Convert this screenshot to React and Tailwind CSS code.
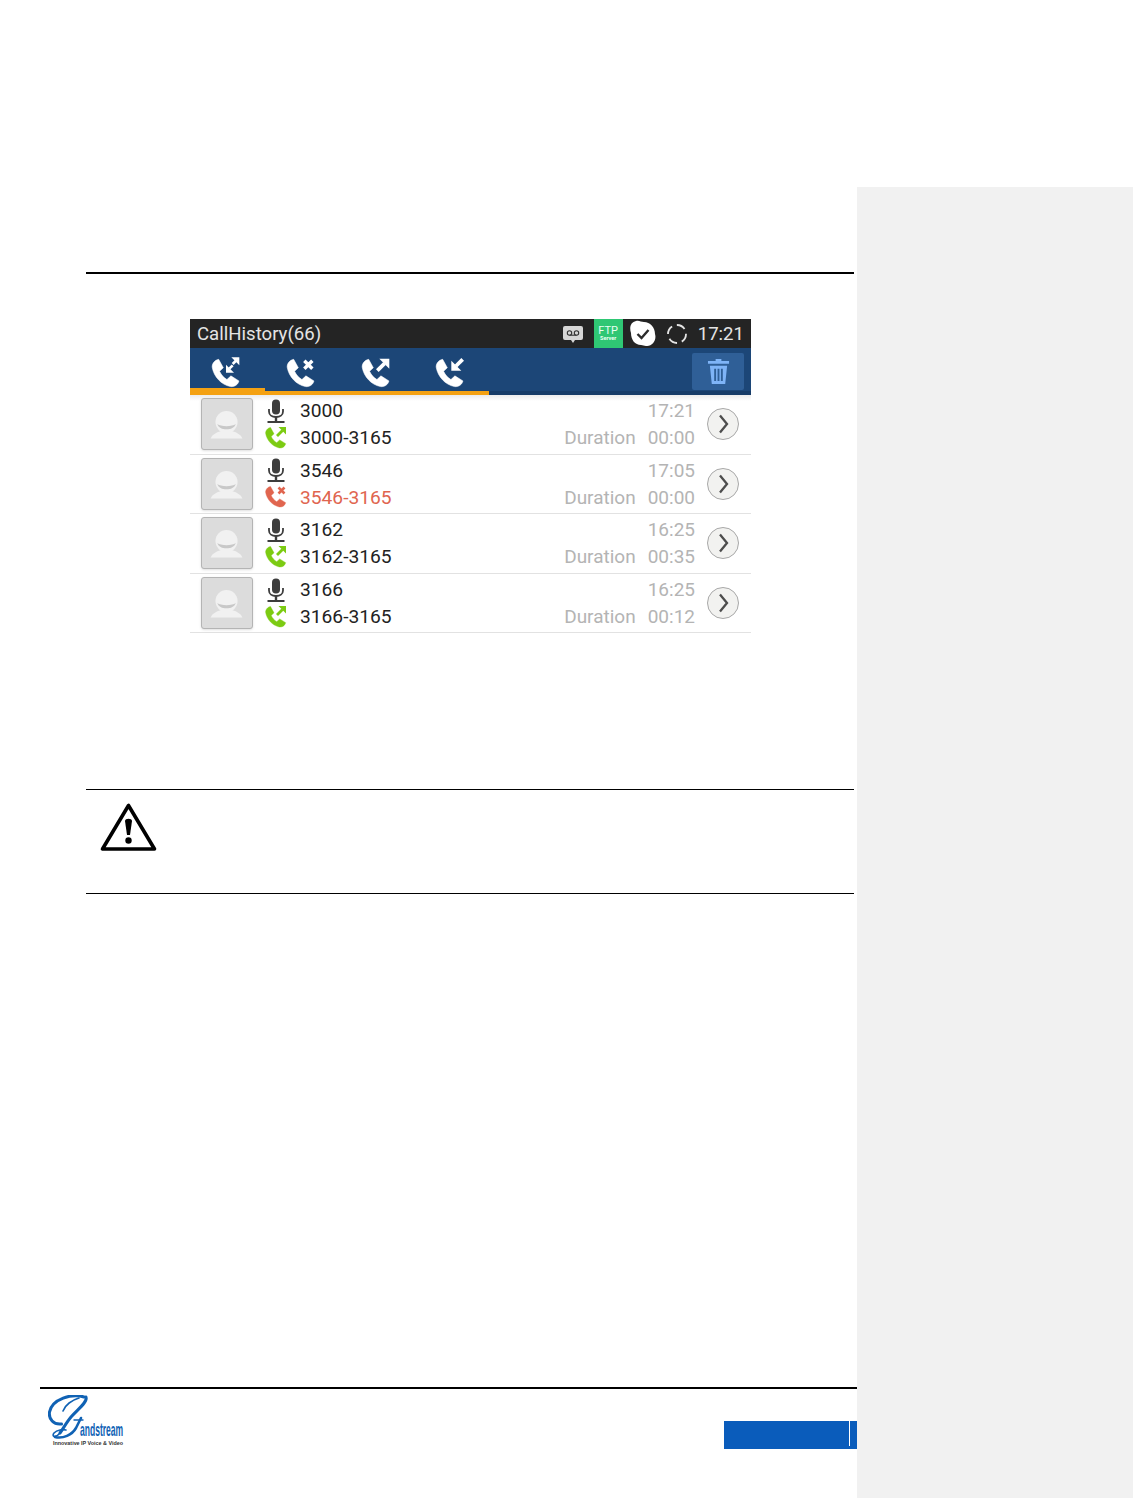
import React from 'react';

const calls = [
  { id: 1, number: '3000', line: '3000-3165', time: '17:21', duration: '00:00', status: 'out' },
  { id: 2, number: '3546', line: '3546-3165', time: '17:05', duration: '00:00', status: 'missed' },
  { id: 3, number: '3162', line: '3162-3165', time: '16:25', duration: '00:35', status: 'out' },
  { id: 4, number: '3166', line: '3166-3165', time: '16:25', duration: '00:12', status: 'out' },
];

// small mark in the top right corner of the handset
const CallMark = ({ type }) => {
  if (type === 'missed') {
    return <path d="M14.500 3.500l6 6M20.500 3.500l-6 6" stroke="currentColor" strokeWidth="2.600" fill="none" />;
  }
  if (type === 'out') {
    return (
      <g>
        <path d="M13 11l5.500-5.500" stroke="currentColor" strokeWidth="2.800" fill="none" />
        <path d="M14.500 2h7.500v7.500z" fill="currentColor" />
      </g>
    );
  }
  if (type === 'in') {
    return (
      <g>
        <path d="M21.500 2.500L16.500 7.500" stroke="currentColor" strokeWidth="2.800" fill="none" />
        <path d="M13 3.500V11h7.500z" fill="currentColor" />
      </g>
    );
  }
  return (
    <g>
      <path d="M17 6l3-3M14.500 9.500l2.500-2.500" stroke="currentColor" strokeWidth="2" fill="none" />
      <path d="M16 1h6v6zM12 6.500v6h6z" fill="currentColor" />
    </g>
  );
};

const CallIcon = ({ type, className }) => (
  <svg viewBox="0 0 24 24" className={`block ${className}`}>
    <path
      d="M6.500 2.500L10 8.800 7.200 11.500c1.300 2.800 3 4.600 5.500 6.200l3-2.800 6 3.800c-.8 3-3.500 4.700-6.500 4.200C8.400 21.500 3 15.500 1.700 8.800 1.200 6 3.500 3 6.500 2.500z"
      fill="currentColor"
      stroke="currentColor"
      strokeWidth="0.400"
      strokeLinejoin="round"
    />
    <CallMark type={type} />
  </svg>
);

const MicIcon = () => (
  <svg viewBox="0 0 18 24" className="block w-[18px] h-[24px]" fill="none" stroke="#3d3d3d">
    <rect x="5" y="0.500" width="8" height="15" rx="4" fill="#3d3d3d" stroke="none" />
    <path d="M2 10v2.500c0 3.500 3 5.500 7 5.500s7-2 7-5.500V10" strokeWidth="1.800" />
    <path d="M9 18v4" strokeWidth="2.400" />
    <path d="M0.500 23h17" strokeWidth="2" />
  </svg>
);

const Avatar = () => (
  <div className="w-[52px] h-[52px] shrink-0 bg-[#dcdcdc] border border-[#b4b4b4] rounded-[3px] shadow-sm">
    <svg viewBox="0 0 52 52" className="w-full h-full">
      <circle cx="25.500" cy="24" r="11.500" fill="#f1f1f1" />
      <path d="M16 26c3 3 16 3 19 0-1 4-5 5.500-9.500 5.500S17 30 16 26z" fill="#c8c8c8" />
      <path d="M9 41c2-5 8-7 12-8h9c4 1 10 3 12 8z" fill="#f1f1f1" />
    </svg>
  </div>
);

const CallRow = ({ call }) => {
  const missed = call.status === 'missed';
  return (
    <div className="h-[59.6px] flex items-center pl-[11px] pr-[12px] border-b border-[#e2e2e2]">
      <Avatar />
      <div className="w-[36px] ml-[11px] shrink-0 flex flex-col mt-[-1px]">
        <div className="ml-[3px]">
          <MicIcon />
        </div>
        <CallIcon type={call.status} className={`w-[24px] h-[24px] mt-[2px] ${missed ? 'text-[#e0654f]' : 'text-[#7ccb12]'}`} />
      </div>
      <div className="flex flex-col text-[19.2px] leading-[27px] text-[#222] mt-[-0.5px]">
        <span>{call.number}</span>
        <span className={missed ? 'text-[#e0654f]' : ''}>{call.line}</span>
      </div>
      <div className="ml-auto flex flex-col items-end text-[19px] leading-[27px] text-[#b4b4b4] mt-[-0.5px]">
        <span>{call.time}</span>
        <span className="flex gap-[12px]">
          <span>Duration</span>
          <span>{call.duration}</span>
        </span>
      </div>
      <div className="ml-[12px] w-[32px] h-[32px] shrink-0 rounded-full bg-[#f2f2f0] border border-[#a8a8a8] flex items-center justify-center">
        <svg viewBox="0 0 13 20" className="w-[13px] h-[20px]">
          <path d="M3 1.500l7 8.500-7 8.500" fill="none" stroke="#4d4d4d" strokeWidth="2.300" />
        </svg>
      </div>
    </div>
  );
};

const PhoneScreen = () => (
  <div className="w-[561px] ml-[190px] mt-[45px] font-['Roboto',sans-serif]">
    <div className="h-[29px] bg-[#242424] flex items-center pl-[7px] pr-[7px] text-[#e4e4e4]">
      <span className="text-[18.6px] pt-[2px]">CallHistory(66)</span>
      <div className="ml-auto flex items-center h-full">
        <svg viewBox="0 0 22 20" className="w-[22px] h-[20px]">
          <path d="M3 2h16a2 2 0 012 2v10a2 2 0 01-2 2h-6l-2 3-2-3H3a2 2 0 01-2-2V4a2 2 0 012-2z" fill="#d6d6d6" />
          <circle cx="7.500" cy="9" r="2.200" fill="none" stroke="#333" strokeWidth="1.100" />
          <circle cx="14.500" cy="9" r="2.200" fill="none" stroke="#333" strokeWidth="1.100" />
          <path d="M7.500 11.200h7" stroke="#333" strokeWidth="1.100" />
        </svg>
        <div className="ml-[10px] w-[29px] h-full bg-[#2fc774] flex flex-col items-center justify-center text-[#eafff2] leading-none">
          <span className="text-[11px]">FTP</span>
          <span className="text-[5.500px] font-bold">Server</span>
        </div>
        <svg viewBox="0 0 26 28" className="ml-[7px] w-[26px] h-[28px]">
          <path d="M6 1c3-1 5 1 8 1 6 0 11 5 11 12 2 6-3 13-9 12-2 0-3-1-5-1C5 25 1 20 1 13-1 7 1 2 6 1z" fill="#fff" />
          <path d="M7.500 14l4 4 7-8" fill="none" stroke="#2b2b2b" strokeWidth="2.400" />
        </svg>
        <svg viewBox="0 0 22 22" className="ml-[10px] w-[22px] h-[22px]">
          <circle cx="11" cy="11" r="9" fill="none" stroke="#e4e4e4" strokeWidth="1.800" strokeDasharray="9 5" />
        </svg>
        <span className="ml-[10px] text-[18.6px] pt-[2px]">17:21</span>
      </div>
    </div>

    <div className="h-[47px] bg-[#1c4677] flex items-stretch">
      <div className="w-[75px] flex justify-center pt-[8px] pr-[3px] text-white border-b-[7px] border-[#f4a112]">
        <CallIcon type="all" className="w-[32px] h-[32px]" />
      </div>
      {['missed', 'out', 'in'].map((t) => (
        <div key={t} className="w-[74.7px] flex justify-center pt-[8px] pr-[3px] text-white border-b-4 border-[#f4a112]">
          <CallIcon type={t} className="w-[32px] h-[32px]" />
        </div>
      ))}
      <div className="flex-1 flex justify-end border-b-4 border-[#173c68]">
        <div className="mr-[7px] mt-[5px] w-[52px] h-[37px] bg-[#2f5f97] rounded-[2px] flex items-center justify-center">
          <svg viewBox="0 0 24 28" className="w-[23px] h-[27px]" fill="#7fb4f7">
            <path d="M9 1h6v2h8v3H1V3h8z" />
            <path d="M3 8h18l-2 19H5zM7.500 11v13h2V11zM11 11v13h2V11zM14.500 11v13h2V11z" fillRule="evenodd" />
          </svg>
        </div>
      </div>
    </div>

    <div className="bg-gradient-to-b from-[#ececec] to-white to-[6px]">
      {calls.map((c) => (
        <CallRow key={c.id} call={c} />
      ))}
    </div>
  </div>
);

const WarningBlock = () => (
  <div className="ml-[86px] w-[768px] h-[105px] mt-[156px] border-t border-b border-black pt-[12px] pl-[14px]">
    <svg viewBox="0 0 58 50" className="w-[58px] h-[50px]">
      <path d="M28.500 3.500L2.500 47h52z" fill="none" stroke="#000" strokeWidth="3.600" strokeLinejoin="round" />
      <path d="M25 19c0-3 7-3 7 0l-2 14h-3z" fill="#000" />
      <circle cx="28.500" cy="38.500" r="3.200" fill="#000" />
    </svg>
  </div>
);

const Logo = () => (
  <svg viewBox="0 0 77 52" className="w-[77px] h-[52px]">
    <g fill="none" stroke="#1062b4" strokeLinecap="round">
      <path d="M36 2C24-2 4 4 1.500 17c-1 7 4 13 12 12" strokeWidth="3" />
      <path d="M38 2c2 5-9 13-15 20-5 6-8 12-11 16" strokeWidth="3" />
      <path d="M31 3c-7 2-14 7-16 13" strokeWidth="1.600" />
      <path d="M12 38c-4 5-9 4-6 0 3-3 9-4 12-3" strokeWidth="1.600" />
      <path d="M7 42c8 2 17-2 21-9l5-10" strokeWidth="2.600" />
      <path d="M26 25h9" strokeWidth="1.400" />
    </g>
    <text transform="translate(32 41) scale(0.45 1)" fontFamily="Liberation Sans, sans-serif" fontSize="19" fontWeight="700" fill="#1062b4">andstream</text>
    <text transform="translate(5 50) scale(0.9 1)" fontFamily="Liberation Sans, sans-serif" fontSize="6" fontWeight="700" fill="#333">Innovative IP Voice &amp; Video</text>
  </svg>
);

const Footer = () => (
  <div className="mt-auto h-[111px] ml-[40px] border-t-2 border-black">
    <div className="flex justify-between items-start">
      <div className="ml-[8px] mt-[6px]">
        <Logo />
      </div>
      <div className="mt-[32px] w-[133px] h-[28px] bg-[#0a5cbb] flex items-start justify-end pr-[7px]">
        <div className="w-[1px] h-[25px] bg-white" />
      </div>
    </div>
  </div>
);

export default function App() {
  return (
    <div className="w-[1133px] h-[1498px] flex overflow-hidden bg-white">
      <div className="w-[857px] shrink-0 flex flex-col pt-[272px]">
        <div className="ml-[86px] w-[768px] h-[2px] bg-black" />
        <PhoneScreen />
        <WarningBlock />
        <Footer />
      </div>
      <div className="flex-1 mt-[187px] bg-[#f1f1f1]" />
    </div>
  );
}
